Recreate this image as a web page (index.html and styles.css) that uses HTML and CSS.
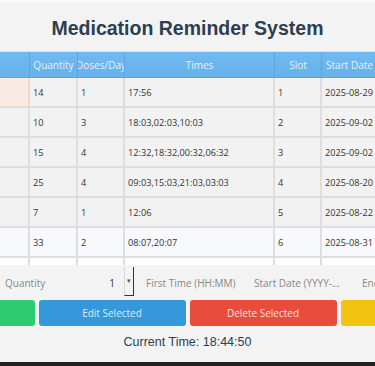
FILE: index.html
```html
<html lang="en">

<head>
  <meta charset="utf-8" />
  <title>Medication Reminder System</title>
  <meta name="viewport" content="width=device-width, initial-scale=1" />
  <link rel="stylesheet" href="styles.css">
</head>

<body>
  <div class="window">
    <h1 class="title">Medication Reminder System</h1>

    <div class="table-wrap">
      <div class="grid">
        <div class="th">Name</div>
        <div class="th">Quantity</div>
        <div class="th">Doses/Day</div>
        <div class="th">Times</div>
        <div class="th">Slot</div>
        <div class="th">Start Date</div>
        <div class="th">End Date</div>

        <div class="td focus">Vitamin D</div>
        <div class="td">14</div>
        <div class="td">1</div>
        <div class="td">17:56</div>
        <div class="td">1</div>
        <div class="td">2025-08-29</div>
        <div class="td">2025-09-12</div>

        <div class="td">Ibuprofen</div>
        <div class="td">10</div>
        <div class="td">3</div>
        <div class="td">18:03,02:03,10:03</div>
        <div class="td">2</div>
        <div class="td">2025-09-02</div>
        <div class="td">2025-09-05</div>

        <div class="td">Amoxicillin</div>
        <div class="td">15</div>
        <div class="td">4</div>
        <div class="td">12:32,18:32,00:32,06:32</div>
        <div class="td">3</div>
        <div class="td">2025-09-02</div>
        <div class="td">2025-09-06</div>

        <div class="td">Paracetamol</div>
        <div class="td">25</div>
        <div class="td">4</div>
        <div class="td">09:03,15:03,21:03,03:03</div>
        <div class="td">4</div>
        <div class="td">2025-08-20</div>
        <div class="td">2025-08-27</div>

        <div class="td">Aspirin</div>
        <div class="td">7</div>
        <div class="td">1</div>
        <div class="td">12:06</div>
        <div class="td">5</div>
        <div class="td">2025-08-22</div>
        <div class="td">2025-08-29</div>

        <div class="td alt">Metformin</div>
        <div class="td alt">33</div>
        <div class="td alt">2</div>
        <div class="td alt">08:07,20:07</div>
        <div class="td alt">6</div>
        <div class="td alt">2025-08-31</div>
        <div class="td alt">2025-09-16</div>

        <div class="td blank"></div>
        <div class="td blank"></div>
        <div class="td blank"></div>
        <div class="td blank"></div>
        <div class="td blank"></div>
        <div class="td blank"></div>
        <div class="td blank"></div>
      </div>
    </div>

    <div class="form-row">
      <span class="label">Quantity</span>
      <span class="spin">1</span>
      <span class="spin-btn">&#9662;</span>
      <span class="field">First Time (HH:MM)</span>
      <span class="field">Start Date (YYYY-MM-DD)</span>
      <span class="field">End Date (YYYY-MM-DD)</span>
    </div>

    <div class="buttons">
      <button class="btn green">Add Medication</button>
      <button class="btn blue">Edit Selected</button>
      <button class="btn red">Delete Selected</button>
      <button class="btn yellow">Clear Fields</button>
    </div>

    <div class="clock">Current Time: 18:44:50</div>
  </div>
</body>

</html>
```

FILE: styles.css
```css
* {
  box-sizing: border-box;
}

body {
  margin: 0;
  background: #222;
  font-family: 'Open Sans', sans-serif;
  font-size: 9.5px;
  overflow: hidden;
}

.window {
  height: 362px;
  background: #f3f3f3;
  border-top: 2px solid #fafafa;
  overflow: hidden;
}

.title {
  margin: 0;
  height: 49px;
  line-height: 52px;
  text-align: center;
  font-family: 'Liberation Sans', Arial, sans-serif;
  font-size: 19.5px;
  font-weight: bold;
  color: #2c3e50;
}

.table-wrap {
  display: flex;
  justify-content: center;
  height: 214px;
  overflow: hidden;
  border-top: 1px solid #e2e2e2;
}

.grid {
  flex: none;
  display: grid;
  grid-template-columns: 120px 48px 47px 150px 47px 56px 87px;
  grid-template-rows: 26px;
  grid-auto-rows: 30px;
}

.th {
  display: flex;
  align-items: center;
  justify-content: center;
  overflow: hidden;
  white-space: nowrap;
  font-size: 10px;
  background: linear-gradient(#70baf1, #66b2ec);
  color: #e4f1fc;
  border-right: 1px solid #5ba6e0;
  border-bottom: 1px solid #5ba6e0;
}

.td {
  display: flex;
  align-items: center;
  padding: 0 2px 0 3px;
  overflow: hidden;
  white-space: nowrap;
  font-size: 9.2px;
  color: #333;
  background: #f2f2f2;
  border-right: 2px solid #dedede;
  border-bottom: 2px solid #dedede;
}

.td.focus {
  background: linear-gradient(90deg, #f5efec, #fbe9e2);
  border-right-color: #efd7cb;
  color: transparent;
}

.td.alt {
  background: #f8f9fd;
}

.td.blank {
  background: #fff;
}

.form-row {
  display: flex;
  align-items: center;
  height: 35px;
  padding-left: 5px;
  font-size: 10px;
  color: #888;
  white-space: nowrap;
}

.form-row > span {
  flex: none;
}

.label {
  width: 40px;
}

.spin {
  width: 79px;
  text-align: right;
  padding-right: 9px;
  color: #333;
}

.spin-btn {
  width: 10px;
  height: 29px;
  margin-top: -3px;
  display: flex;
  align-items: center;
  justify-content: center;
  font-size: 7px;
  color: #555;
  border-left: 1px solid #d8d8d8;
  border-right: 1px solid #333;
  border-bottom: 1px solid #333;
}

.field {
  width: 100px;
  margin-left: 9px;
  padding: 0 3px;
  overflow: hidden;
  text-overflow: ellipsis;
}

.field + .field {
  margin-left: 8px;
}

.buttons {
  display: flex;
  justify-content: center;
  gap: 4px;
  height: 26px;
  overflow: hidden;
}

.btn {
  flex: none;
  width: 147px;
  border: none;
  border-radius: 3px;
  font-family: 'Open Sans', sans-serif;
  font-size: 10px;
  color: rgba(255, 255, 255, 0.85);
}

.green {
  background: #2ecc71;
}

.blue {
  background: #3498db;
}

.red {
  background: #e74c3c;
}

.yellow {
  background: #f1c40f;
}

.clock {
  margin-top: 9px;
  text-align: center;
  font-family: 'Liberation Sans', Arial, sans-serif;
  font-size: 12.5px;
  color: #2c3e50;
}
```
